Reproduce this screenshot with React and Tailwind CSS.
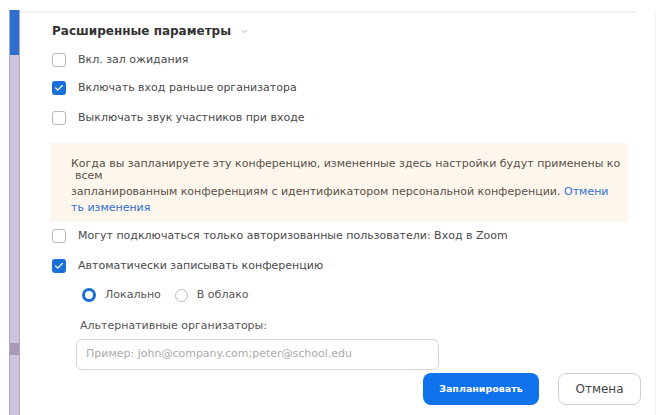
import { Check, ChevronDown } from "lucide-react";

function Box({ checked }) {
  return checked ? (
    <span className="flex h-[14px] w-[14px] shrink-0 items-center justify-center rounded-[3px] bg-[#1a6fd8]">
      <Check className="h-[10px] w-[10px] text-white" strokeWidth={3} />
    </span>
  ) : (
    <span className="h-[14px] w-[14px] shrink-0 rounded-[3px] border border-[#b9b9b9] bg-white" />
  );
}

function Option({ checked, children, className = "" }) {
  return (
    <label className={`flex h-[14px] items-center gap-[12px] ${className}`}>
      <Box checked={checked} />
      <span className="text-[11px] text-[#4a4a4a]">{children}</span>
    </label>
  );
}

function Radio({ on, children }) {
  return (
    <label className="flex items-center gap-[9px]">
      {on ? (
        <span className="h-[14px] w-[14px] rounded-full border-[3.5px] border-[#1a6fd8] bg-white" />
      ) : (
        <span className="h-[13px] w-[13px] rounded-full border border-[#b9b9b9] bg-white" />
      )}
      <span className="text-[11px] text-[#555]">{children}</span>
    </label>
  );
}

export default function App() {
  return (
    <div className="flex h-[415px] w-[662px] overflow-hidden bg-white font-['DejaVu_Sans',sans-serif]">
      {/* scroll rail on the left */}
      <div className="ml-[9px] mt-[10px] flex w-[11px] flex-col border-x border-[#b3a8c6] bg-[#cdc4dc]">
        <div className="h-[45px] bg-[#2f6fd0]" />
        <div className="mt-[288px] h-[12px] bg-[#a79bb9]" />
      </div>

      <div className="flex flex-1 flex-col">
        <div className="mt-[11px] mr-[26px] h-[2px] bg-[#f1f1f1]" />

        <div className="mr-[6px] flex flex-1 border-r border-[#eef3f8]">
          <div className="flex flex-1 flex-col pl-[32px]">
            <div className="mt-[11px] flex h-[14px] items-center gap-[9px]">
              <span className="text-[12px] font-bold text-[#333]">Расширенные параметры</span>
              <ChevronDown className="h-[9px] w-[9px] text-[#999]" />
            </div>

            <Option className="mt-[15px]">Вкл. зал ожидания</Option>
            <Option checked className="mt-[14px]">Включать вход раньше организатора</Option>
            <Option className="mt-[16px]">Выключать звук участников при входе</Option>

            <div className="-ml-[2px] mt-[18px] w-[578px] bg-[#fdf6ec] pl-[21px] pt-[13px] pb-[6px] text-[11px] leading-[16px] text-[#5a5148]">
              <div>Когда вы запланируете эту конференцию, измененные здесь настройки будут применены ко</div>
              <div className="-mt-[4px] pl-[4px]">всем</div>
              <div>
                запланированным конференциям с идентификатором персональной конференции.{" "}
                <span className="text-[#2f6fd0]">Отмени</span>
              </div>
              <div className="text-[#2f6fd0]">ть изменения</div>
            </div>

            <Option className="mt-[7px]">Могут подключаться только авторизованные пользователи: Вход в Zoom</Option>
            <Option checked className="mt-[16px]">Автоматически записывать конференцию</Option>

            <div className="ml-[30px] mt-[15px] flex h-[14px] items-center gap-[14px]">
              <Radio on>Локально</Radio>
              <Radio>В облако</Radio>
            </div>

            <div className="ml-[28px] mt-[17px] text-[11px] leading-[14px] text-[#555]">Альтернативные организаторы:</div>
            <div className="ml-[24px] mt-[6px] flex h-[31px] w-[363px] items-center rounded-[6px] border border-[#d6d6d6] px-[9px] text-[11px] text-[#aaa]">
              Пример: john@company.com;peter@school.edu
            </div>

            <div className="mr-[14px] mt-[3px] flex justify-end gap-[19px]">
              <button className="h-[32px] w-[116px] rounded-[8px] bg-[#0e72ed] text-[9.5px] font-bold text-white">
                Запланировать
              </button>
              <button className="h-[32px] w-[83px] rounded-[8px] border border-[#cfcfcf] bg-white text-[12px] text-[#444]">
                Отмена
              </button>
            </div>
          </div>
        </div>
      </div>
    </div>
  );
}
